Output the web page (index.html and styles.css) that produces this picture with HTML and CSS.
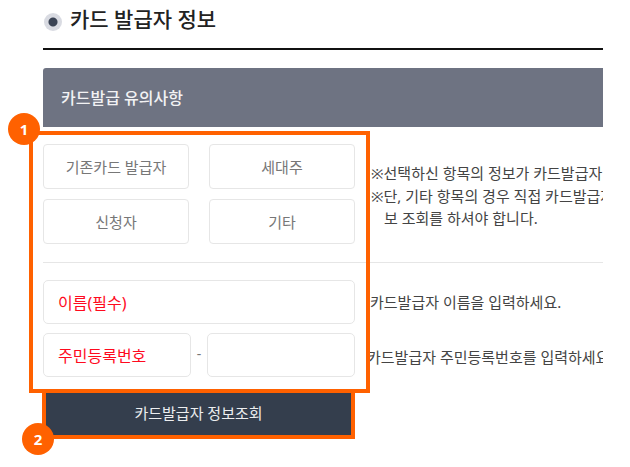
FILE: index.html
```html
<!DOCTYPE html>
<html lang="ko">
<head>
<meta charset="utf-8">
<title>카드 발급자 정보</title>
<link rel="stylesheet" href="styles.css">
</head>
<body>
<main class="page">
  <h1 class="title"><span class="dot"></span>카드 발급자 정보</h1>
  <div class="panel">카드발급 유의사항</div>
  <section class="choice">
    <div class="choice-grid">
      <button class="opt">기존카드 발급자</button>
      <button class="opt">세대주</button>
      <button class="opt">신청자</button>
      <button class="opt">기타</button>
    </div>
    <div class="note">
      <p>※선택하신 항목의 정보가 카드발급자 정보로 자동 입력됩니다.</p>
      <p>※단, 기타 항목의 경우 직접 카드발급자 정보를 입력하여 정</p>
      <p class="indent">보 조회를 하셔야 합니다.</p>
    </div>
  </section>
  <hr class="divider">
  <section class="row name-row">
    <div class="field wide">이름(필수)</div>
    <p class="hint">카드발급자 이름을 입력하세요.</p>
  </section>
  <section class="row rrn-row">
    <div class="rrn">
      <div class="field first">주민등록번호</div>
      <span class="dash">-</span>
      <div class="field second"></div>
    </div>
    <p class="hint rrn-hint">카드발급자 주민등록번호를 입력하세요.</p>
  </section>
  <button class="submit">카드발급자 정보조회</button>
</main>
<div class="mark box-one"></div>
<div class="mark box-two"></div>
<div class="badge badge-one">1</div>
<div class="badge badge-two">2</div>
</body>
</html>
```

FILE: styles.css
```css
* { box-sizing: border-box; }
html, body { margin: 0; padding: 0; }
body {
  width: 630px;
  height: 467px;
  position: relative;
  overflow: hidden;
  background: #fff;
  font-family: "Noto Sans", "Noto Sans CJK KR", sans-serif;
  color: #444;
}
.page {
  width: 560px;
  margin-left: 43px;
  overflow: hidden;
  height: 467px;
}
.title {
  margin: 0;
  height: 50px;
  border-bottom: 2px solid #111;
  display: flex;
  align-items: flex-start;
  padding-top: 2px;
  font-size: 21px;
  line-height: 34px;
  font-weight: 500;
  color: #222;
}
.dot {
  width: 18px;
  height: 18px;
  margin: 11px 8px 0 1px;
  border-radius: 50%;
  background: radial-gradient(circle, #3a4354 0 4px, #d9dbe2 5px);
}
.panel {
  margin-top: 18px;
  height: 59px;
  background: #6e7382;
  border-radius: 3px 0 0 0;
  color: #f2f2f4;
  font-size: 16px;
  font-weight: 500;
  line-height: 61px;
  padding-left: 18px;
}
.choice {
  display: flex;
  margin-top: 17px;
  height: 100px;
}
.choice-grid {
  width: 312px;
  flex: none;
  display: grid;
  grid-template-columns: 146px 146px;
  grid-auto-rows: 45px;
  column-gap: 20px;
  row-gap: 10px;
}
.opt {
  font: inherit;
  font-size: 15px;
  color: #777;
  background: #fff;
  border: 1px solid #e6e6e6;
  border-radius: 4px;
  padding: 0;
}
.note {
  margin: 18px 0 0 16px;
  white-space: nowrap;
  font-size: 15px;
  line-height: 22.5px;
  color: #444;
}
.note p { margin: 0; }
.note .indent { padding-left: 13px; }
.divider {
  margin: 18px 0 17px;
  border: 0;
  border-top: 1px solid #e6e6e6;
  height: 1px;
}
.row { display: flex; align-items: center; white-space: nowrap; }
.name-row { height: 44px; }
.rrn-row { height: 44px; margin-top: 9px; }
.field {
  height: 100%;
  background: #fff;
  border: 1px solid #e6e6e6;
  border-radius: 5px;
  color: #ff0a1e;
  font-size: 16px;
  display: flex;
  align-items: center;
  padding: 0 0 1px 14px;
}
.wide { width: 312px; flex: none; }
.rrn { width: 312px; flex: none; height: 100%; display: flex; align-items: center; }
.first { width: 148px; flex: none; padding-bottom: 0; }
.dash { width: 16px; flex: none; text-align: center; font-size: 14px; color: #777; padding-bottom: 3px; }
.second { width: 148px; flex: none; }
.hint { margin: 0 0 2px 15px; font-size: 15px; color: #444; }
.rrn-hint { margin: 3px 0 0 12px; }
.submit {
  display: block;
  margin: 16px 0 0 3px;
  width: 305px;
  height: 42px;
  border: 0;
  padding: 0 0 4px;
  background: #343e4d;
  color: #eceef0;
  font: inherit;
  font-size: 15px;
}
.mark { position: absolute; border: 4px solid #ff6100; }
.box-one { left: 29px; top: 131px; width: 341px; height: 262px; background: transparent; }
.box-two { left: 42px; top: 389px; width: 313px; height: 50px; border-top: 0; }
.badge {
  position: absolute;
  width: 32px;
  height: 32px;
  border-radius: 50%;
  background: #ff6100;
  color: #fff;
  font-size: 15px;
  font-weight: 700;
  line-height: 32px;
  text-align: center;
  font-family: "Noto Sans", sans-serif;
}
.badge-one { left: 8px; top: 113px; }
.badge-two { left: 22px; top: 423px; }
```
